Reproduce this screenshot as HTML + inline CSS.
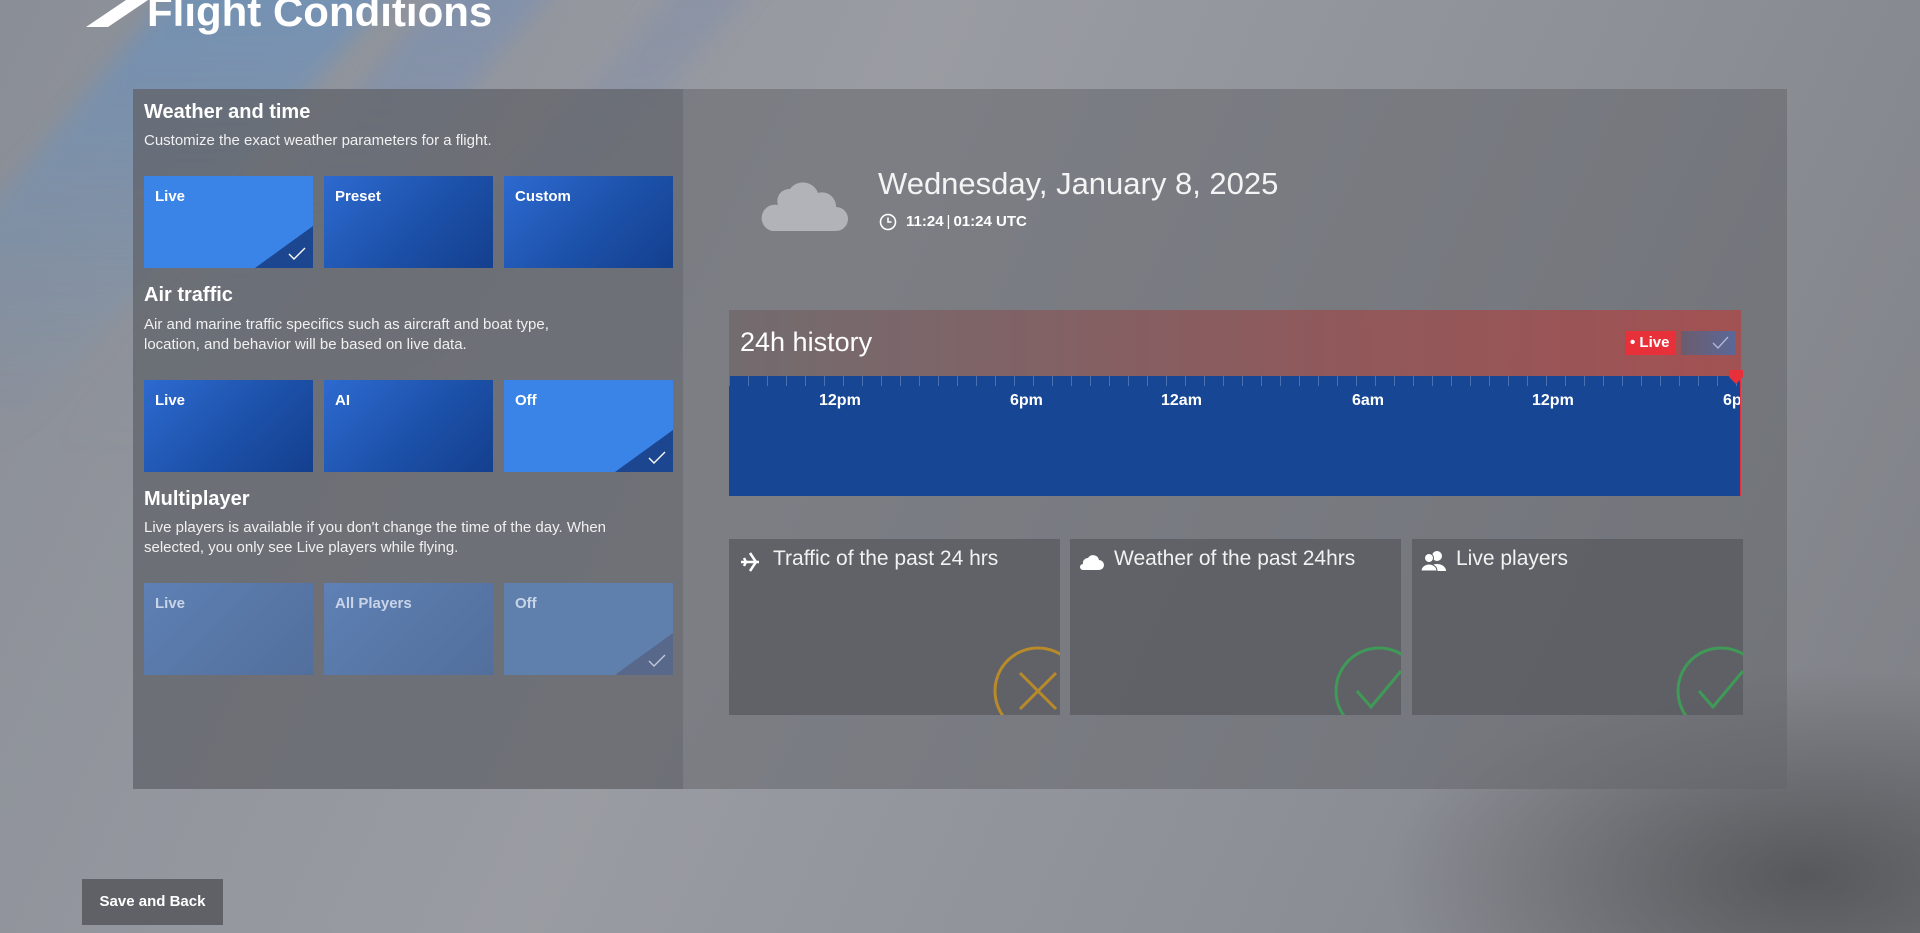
<!DOCTYPE html>
<html style="overflow:hidden;width:1920px;height:933px"><head><meta charset="utf-8"><style>
*{margin:0;padding:0;box-sizing:border-box}
body{width:1920px;height:933px;overflow:hidden;position:relative;font-family:"Liberation Sans",sans-serif;color:#fff;
background:linear-gradient(115deg,#8a8e96 0%,#9a9ca3 40%,#8d9097 70%,#7e8086 100%);}
.streak{position:absolute;top:-200px;height:650px;transform:skewX(-40deg);filter:blur(14px);}
.shadow{position:absolute;left:1350px;top:650px;width:570px;height:283px;background:radial-gradient(ellipse at 80% 80%,rgba(60,60,62,.6),rgba(60,60,62,0) 65%);}
.title{position:absolute;left:147px;top:-12px;font-size:42px;font-weight:bold;}
.slash{position:absolute;left:86px;top:0;width:62px;height:27px;background:#fff;clip-path:polygon(40px 0,62px 0,22px 27px,0 27px);}
.panel{position:absolute;left:133px;top:89px;width:1654px;height:700px;background:rgba(100,102,108,0.55);}
.left{position:absolute;left:133px;top:89px;width:550px;height:700px;background:rgba(95,98,104,0.45);}
h2{position:absolute;font-size:20px;font-weight:bold;}
.d{position:absolute;font-size:15px;line-height:20px;color:#f0f0f0;}
.tile{position:absolute;width:169px;height:92px;background:linear-gradient(135deg,#2d6ad0,#1b4fa6 60%,#143f8e);overflow:hidden;}
.tile span{position:absolute;left:11px;top:12px;font-size:15px;font-weight:bold;}
.tile.sel{background:#3a84e8}
.tile.sel:after{content:"";position:absolute;right:0;bottom:0;width:58px;height:42px;background:#1c4690;clip-path:polygon(100% 0,100% 100%,0 100%);}
.tile svg{position:absolute;right:7px;bottom:7px;z-index:2}
.mp{background:linear-gradient(135deg,#5e80b4,#526f9c)!important}
.mp span{color:#c8d4e8}
.mp.sel{background:#5f7fad!important}
.mp.sel:after{background:#58688a!important}
.hist{position:absolute;left:729px;top:310px;width:1012px;height:186px;}
.hh{height:66px;background:linear-gradient(90deg,rgba(110,100,102,.7),rgba(150,80,82,.8) 60%,rgba(170,75,75,.85));position:relative}
.hb{height:120px;position:relative;
background-image:repeating-linear-gradient(90deg,#4c6fb0 0 1px,transparent 1px 19px);background-size:100% 10px;background-repeat:no-repeat;background-color:#174794}
.lbl{position:absolute;top:16px;font-size:16px;font-weight:bold}
.card{position:absolute;top:539px;width:331px;height:176px;background:rgba(88,90,95,.75);overflow:hidden}
.card .t{position:absolute;left:44px;top:8px;font-size:21px;color:#f2f2f2}
.card svg.c{position:absolute;right:-28px;bottom:-26px}
</style></head><body>
<div class="streak" style="left:60px;width:220px;background:linear-gradient(180deg,rgba(70,145,225,.5),rgba(70,145,225,0))"></div>
<div class="streak" style="left:330px;width:110px;background:linear-gradient(180deg,rgba(80,135,215,.35),rgba(80,135,215,0))"></div>
<div class="streak" style="left:560px;width:80px;background:linear-gradient(180deg,rgba(90,125,190,.25),rgba(90,125,190,0))"></div>
<div class="shadow"></div>
<div class="slash"></div>
<div class="title">Flight Conditions</div>
<div class="panel"></div><div class="left"></div>

<h2 style="left:144px;top:101px">Weather and time</h2>
<div class="d" style="left:144px;top:131px">Customize the exact weather parameters for a flight.</div>
<div class="tile sel" style="left:144px;top:176px"><span>Live</span><svg width="18" height="14"><path d="M1 7l5 5 11-11" stroke="#fff" fill="none" stroke-width="1.4"/></svg></div>
<div class="tile" style="left:324px;top:176px"><span>Preset</span></div>
<div class="tile" style="left:504px;top:176px"><span>Custom</span></div>

<h2 style="left:144px;top:284px">Air traffic</h2>
<div class="d" style="left:144px;top:315px">Air and marine traffic specifics such as aircraft and boat type,<br>location, and behavior will be based on live data.</div>
<div class="tile" style="left:144px;top:380px"><span>Live</span></div>
<div class="tile" style="left:324px;top:380px"><span>AI</span></div>
<div class="tile sel" style="left:504px;top:380px"><span>Off</span><svg width="18" height="14"><path d="M1 7l5 5 11-11" stroke="#fff" fill="none" stroke-width="1.4"/></svg></div>

<h2 style="left:144px;top:488px">Multiplayer</h2>
<div class="d" style="left:144px;top:518px">Live players is available if you don't change the time of the day. When<br>selected, you only see Live players while flying.</div>
<div class="tile mp" style="left:144px;top:583px"><span>Live</span></div>
<div class="tile mp" style="left:324px;top:583px"><span>All Players</span></div>
<div class="tile mp sel" style="left:504px;top:583px"><span>Off</span><svg width="18" height="14"><path d="M1 7l5 5 11-11" stroke="#c0c8d8" fill="none" stroke-width="1.4"/></svg></div>

<svg style="position:absolute;left:758px;top:174px" width="90" height="58"><path d="M14 57h64a12 12 0 0 0 0-24 14 14 0 0 0-18-14 16 16 0 0 0-28-4 12 12 0 0 0-12 16 12 12 0 0 0-6 26z" fill="#b1b3b8"/></svg>
<div style="position:absolute;left:878px;top:166px;font-size:31px;color:#f4f4f4">Wednesday, January 8, 2025</div>
<svg style="position:absolute;left:879px;top:213px" width="18" height="18"><circle cx="9" cy="9" r="7.5" stroke="#fff" stroke-width="1.6" fill="none"/><path d="M9 4.5V9h3.5" stroke="#fff" stroke-width="1.6" fill="none"/></svg>
<div style="position:absolute;left:906px;top:213px;font-size:15px;font-weight:bold">11:24<span style="font-weight:normal;margin:0 3px">|</span>01:24 UTC</div>

<div class="hist">
 <div class="hh"><div style="position:absolute;left:11px;top:17px;font-size:27px">24h history</div>
  <div style="position:absolute;left:896px;top:21px;width:51px;height:24px;background:#e8303a;font-size:15px;font-weight:bold;line-height:24px;padding-left:5px">• Live</div>
  <div style="position:absolute;left:952px;top:21px;width:54px;height:24px;background:linear-gradient(90deg,#6c5c6e,#5a6898)"><svg style="position:absolute;right:6px;top:4px" width="18" height="16"><path d="M2 8l5 5 10-11" stroke="#b0b8d8" fill="none" stroke-width="1.4"/></svg></div>
 </div>
 <div class="hb">
  <div class="lbl" style="left:90px">12pm</div><div class="lbl" style="left:281px">6pm</div>
  <div class="lbl" style="left:432px">12am</div><div class="lbl" style="left:623px">6am</div>
  <div class="lbl" style="left:803px">12pm</div><div class="lbl" style="left:994px">6p</div>
  <div style="position:absolute;right:-2px;top:-6px;width:14px;height:14px;background:#e8303a;clip-path:polygon(0 0,100% 0,100% 50%,50% 100%,0 50%)"></div>
  <div style="position:absolute;right:0;top:0;width:1px;height:120px;background:#e8303a"></div>
 </div>
</div>

<div class="card" style="left:729px"><svg style="position:absolute;left:10px;top:12px" width="22" height="22"><path d="M2 11h18M11 2l6 9-6 9M5 7l2 4-2 4" stroke="#fff" stroke-width="2.5" fill="none"/></svg><div class="t">Traffic of the past 24 hrs</div>
<svg class="c" width="100" height="100"><circle cx="50" cy="50" r="43" stroke="#b88a2a" stroke-width="3" fill="none"/><path d="M32 32l36 36M68 32L32 68" stroke="#b88a2a" stroke-width="3"/></svg></div>
<div class="card" style="left:1070px"><svg style="position:absolute;left:8px;top:12px" width="26" height="20"><path d="M5 19h16a5 5 0 0 0 0-10 6 6 0 0 0-11-2 5 5 0 0 0-5 6 3 3 0 0 0 0 6z" fill="#fff"/></svg><div class="t">Weather of the past 24hrs</div>
<svg class="c" width="100" height="100"><circle cx="50" cy="50" r="43" stroke="#3f9a58" stroke-width="3" fill="none"/><path d="M28 50l14 16 30-36" stroke="#3f9a58" stroke-width="3" fill="none"/></svg></div>
<div class="card" style="left:1412px"><svg style="position:absolute;left:8px;top:10px" width="28" height="24"><circle cx="17" cy="7" r="5" fill="#fff"/><path d="M8 22a9 7 0 0 1 18 0z" fill="#fff"/><circle cx="9" cy="9" r="4.5" fill="#fff" stroke="#5a5c60"/><path d="M1 22a8 7 0 0 1 16 0z" fill="#fff" stroke="#5a5c60"/></svg><div class="t">Live players</div>
<svg class="c" width="100" height="100"><circle cx="50" cy="50" r="43" stroke="#3f9a58" stroke-width="3" fill="none"/><path d="M28 50l14 16 30-36" stroke="#3f9a58" stroke-width="3" fill="none"/></svg></div>

<div style="position:absolute;left:82px;top:879px;width:141px;height:46px;background:#5f6166;font-size:15px;font-weight:bold;text-align:center;line-height:46px">Save and Back</div>
</body></html>
